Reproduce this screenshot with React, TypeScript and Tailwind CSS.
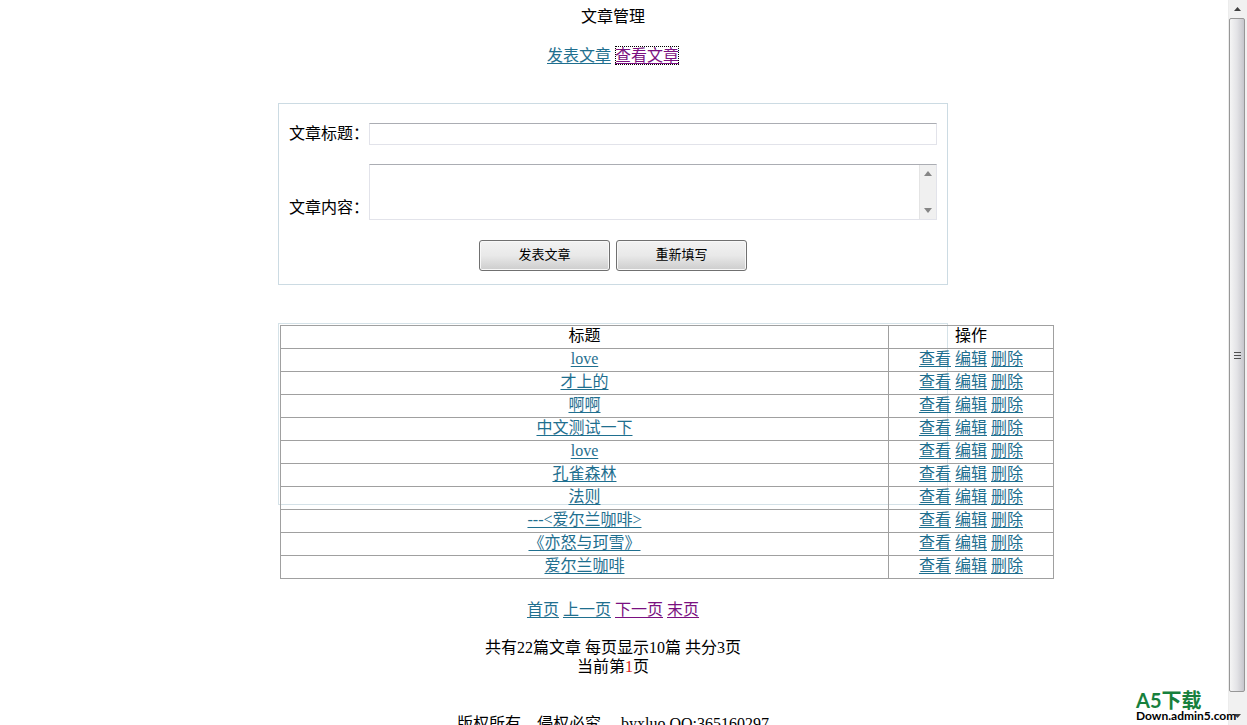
import React from 'react';

// --- Data ---

interface Article {
  id: number;
  title: string;
}

const articles: Article[] = [
  { id: 1, title: 'love' },
  { id: 2, title: '才上的' },
  { id: 3, title: '啊啊' },
  { id: 4, title: '中文测试一下' },
  { id: 5, title: 'love' },
  { id: 6, title: '孔雀森林' },
  { id: 7, title: '法则' },
  { id: 8, title: '---<爱尔兰咖啡>' },
  { id: 9, title: '《亦怒与珂雪》' },
  { id: 10, title: '爱尔兰咖啡' },
];

const actions = ['查看', '编辑', '删除'];

const pages = [
  { label: '首页', visited: false },
  { label: '上一页', visited: false },
  { label: '下一页', visited: true },
  { label: '末页', visited: true },
];

const linkClass = 'text-[#1f6f8f] underline underline-offset-2';
const visitedClass = 'text-[#7a1080] underline underline-offset-2';
const cellClass = 'border border-[#a0a0a0] p-0 pb-[3px] font-normal';
const buttonClass =
  'h-[31px] w-[131px] rounded-[3px] border border-[#707070] bg-linear-to-b from-[#f2f2f2] from-0% via-[#e9e9e9] via-50% to-[#cdcdcd] pb-[2px] text-[13px] leading-4 shadow-[inset_0_0_0_1px_#f8f8f8]';

// --- Form ---

const ArticleForm: React.FC = () => (
  <form
    className="w-[670px] border border-[#ccdbe3] px-[10px] pt-[19px] pb-[13px]"
    onSubmit={(e) => e.preventDefault()}
  >
    <div className="flex items-center">
      <label htmlFor="title" className="w-20 shrink-0 pb-[2px]">文章标题：</label>
      <input
        id="title"
        type="text"
        className="h-[22px] min-w-0 flex-1 border border-[#e2e3ea] border-t-[#abadb3] px-1 outline-none"
      />
    </div>

    <div className="mt-[19px] flex items-end">
      <label htmlFor="content" className="w-20 shrink-0 pb-[3px]">文章内容：</label>
      <div className="flex h-[56px] min-w-0 flex-1 border border-[#e2e3ea] border-t-[#abadb3]">
        <textarea id="content" className="min-w-0 flex-1 resize-none px-1 outline-none" />
        <div className="flex w-[17px] flex-col items-center justify-between border-l border-[#e4e4e4] bg-[#f0f0f0] py-[6px]">
          <svg width="8" height="5" viewBox="0 0 8 5"><path d="M4 0L8 5H0z" fill="#868686" /></svg>
          <svg width="8" height="5" viewBox="0 0 8 5"><path d="M0 0H8L4 5z" fill="#868686" /></svg>
        </div>
      </div>
    </div>

    <div className="mt-5 flex justify-center gap-[6px]">
      <button type="submit" className={buttonClass}>发表文章</button>
      <button type="reset" className={buttonClass}>重新填写</button>
    </div>
  </form>
);

// --- List ---

const ArticleTable: React.FC = () => (
  <div className="relative isolate w-[670px] pt-[2px] pl-[2px]">
    {/* The frame is narrower and shorter than the table it holds */}
    <div className="pointer-events-none absolute inset-x-0 top-0 -z-10 h-[182px] border border-[#d5e2e8]" />
    <table className="w-[774px] table-fixed border-collapse border border-[#a0a0a0] text-center">
      <colgroup>
        <col />
        <col className="w-[165px]" />
      </colgroup>
      <thead>
        <tr className="h-[23px]">
          <th className={cellClass}>标题</th>
          <th className={cellClass}>操作</th>
        </tr>
      </thead>
      <tbody>
        {articles.map((article) => (
          <tr key={article.id} className="h-[23px]">
            <td className={cellClass}>
              <a href="#" className={linkClass}>{article.title}</a>
            </td>
            <td className={cellClass}>
              <div className="flex justify-center gap-1">
                {actions.map((action) => (
                  <a key={action} href="#" className={linkClass}>{action}</a>
                ))}
              </div>
            </td>
          </tr>
        ))}
      </tbody>
    </table>
  </div>
);

// --- Window scrollbar ---

const Scrollbar: React.FC = () => (
  <div className="flex w-[19px] shrink-0 flex-col border-l border-[#ececec] bg-[#f1f1f1] pr-[2px]">
    <div className="flex h-[18px] items-center justify-center">
      <svg width="7" height="4" viewBox="0 0 7 4"><path d="M3.5 0L7 4H0z" fill="#404040" /></svg>
    </div>
    <div className="flex h-[674px] flex-col items-center justify-center gap-[2px] rounded-[2px] border border-[#979797] bg-linear-to-r from-[#f5f5f5] via-[#e3e3e6] to-[#c6c6cc]">
      <span className="h-px w-[7px] bg-[#505050]" />
      <span className="h-px w-[7px] bg-[#505050]" />
      <span className="h-px w-[7px] bg-[#505050]" />
    </div>
    <div className="mt-auto flex h-[18px] items-center justify-center">
      <svg width="7" height="4" viewBox="0 0 7 4"><path d="M0 0H7L3.5 4z" fill="#404040" /></svg>
    </div>
  </div>
);

// --- Main Component ---

const App: React.FC = () => (
  <div className="relative flex h-screen overflow-hidden bg-white font-['Liberation_Serif','Noto_Sans_CJK_SC',serif] text-[16px] leading-[19px] text-black">
    <main className="flex min-w-0 flex-1 flex-col items-center pt-[7px] pr-[2px]">
      <h1>文章管理</h1>
      <nav className="mt-5 flex gap-1">
        <a href="#" className={linkClass}>发表文章</a>
        <a href="#" className="text-[#7a1080] underline underline-offset-2 outline-1 -outline-offset-1 outline-dotted outline-black">查看文章</a>
      </nav>

      <div className="mt-[38px]">
        <ArticleForm />
      </div>
      <div className="mt-[38px]">
        <ArticleTable />
      </div>

      <nav className="mt-[21px] flex gap-1">
        {pages.map((page) => (
          <a key={page.label} href="#" className={page.visited ? visitedClass : linkClass}>{page.label}</a>
        ))}
      </nav>

      <p className="mt-[19px] text-center">
        共有22篇文章 每页显示10篇 共分3页
        <br />
        当前第<span className="text-[#e02020]">1</span>页
      </p>

      <footer className="mt-[38px] whitespace-pre">{'版权所有    侵权必究     byxluo QQ:365160297'}</footer>
    </main>

    <Scrollbar />

    <div className="absolute right-[9px] bottom-[3px] w-[102px] font-['Lato','Noto_Sans_CJK_SC',sans-serif] font-bold">
      <div className="text-[20px] leading-5 text-[#17803d]">A5下载</div>
      <div className="text-[12px] leading-3">Down.admin5.com</div>
    </div>
  </div>
);

export default App;
